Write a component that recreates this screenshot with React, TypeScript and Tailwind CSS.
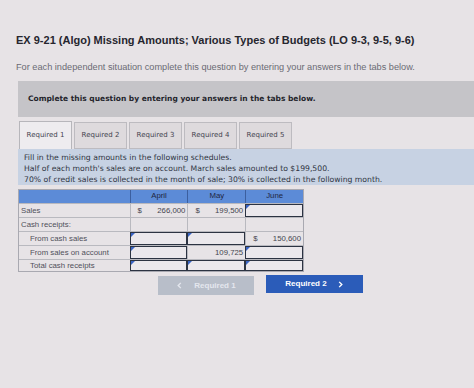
const tabs = ["Required 1", "Required 2", "Required 3", "Required 4", "Required 5"];

type Cell = { kind: "value"; dollar?: boolean; text: string } | { kind: "input" } | { kind: "blank" };

const rows: { label: string; indent?: boolean; cells: Cell[] }[] = [
  {
    label: "Sales",
    cells: [
      { kind: "value", dollar: true, text: "266,000" },
      { kind: "value", dollar: true, text: "199,500" },
      { kind: "input" },
    ],
  },
  { label: "Cash receipts:", cells: [{ kind: "blank" }, { kind: "blank" }, { kind: "blank" }] },
  {
    label: "From cash sales",
    indent: true,
    cells: [{ kind: "input" }, { kind: "input" }, { kind: "value", dollar: true, text: "150,600" }],
  },
  {
    label: "From sales on account",
    indent: true,
    cells: [{ kind: "input" }, { kind: "value", text: "109,725" }, { kind: "input" }],
  },
  {
    label: "Total cash receipts",
    indent: true,
    cells: [{ kind: "input" }, { kind: "input" }, { kind: "input" }],
  },
];

function TableCell({ cell }: { cell: Cell }) {
  if (cell.kind === "input") {
    return (
      <div className="relative w-[58px] h-full border border-[#2c3342] bg-[#ebe8ec]">
        <span className="absolute left-0 top-0 w-0 h-0 border-t-[4px] border-r-[4px] border-t-[#3a64c4] border-r-transparent" />
      </div>
    );
  }
  if (cell.kind === "blank") {
    return <div className="w-[58px] h-full border-l border-[#b9b9bf]" />;
  }
  return (
    <div className="w-[58px] h-full border-l border-[#b9b9bf] flex items-center justify-between pl-[7px] pr-[2px] text-[#45454f]">
      <span>{cell.dollar ? "$" : ""}</span>
      <span>{cell.text}</span>
    </div>
  );
}

export default function App() {
  return (
    <div className="w-[474px] h-[388px] overflow-hidden bg-[#e7e3e6] font-['DejaVu_Sans',sans-serif] text-[#2e2e36]">
      <div className="pt-[32px] pl-[16px] whitespace-nowrap font-['Liberation_Sans',Arial,sans-serif]">
        <h1 className="text-[11px] font-bold text-[#26262e] leading-[16px]">
          EX 9-21 (Algo) Missing Amounts; Various Types of Budgets (LO 9-3, 9-5, 9-6)
        </h1>
        <p className="mt-[13px] text-[9.2px] text-[#6b6b74] leading-[12px]">
          For each independent situation complete this question by entering your answers in the tabs below.
        </p>
      </div>

      <div className="ml-[18px] mt-[8px]">
        <div className="h-[36px] bg-[#c5c4c8] flex items-center pl-[10px] whitespace-nowrap">
          <p className="text-[7.5px] font-bold text-[#24242c]">
            Complete this question by entering your answers in the tabs below.
          </p>
        </div>

        <div className="flex items-end gap-[2px] mt-[4px] ml-[1px] h-[28px]">
          {tabs.map((t, i) => (
            <div
              key={t}
              className={
                i === 0
                  ? "w-[53px] h-[28px] bg-[#eeecef] border border-b-0 border-[#b7b6bb] flex items-center justify-center text-[7px] text-[#444450] relative z-10"
                  : "w-[53px] h-[27px] bg-[#dedadd] border border-[#bdbbc0] flex items-center justify-center text-[7px] text-[#444450]"
              }
            >
              {t}
            </div>
          ))}
        </div>

        <div className="bg-[#c7d2e3] h-[36px] pl-[6px] pt-[3px] text-[7.7px] leading-[11px] text-[#2f3442] whitespace-nowrap">
          <p>Fill in the missing amounts in the following schedules.</p>
          <p>Half of each month&apos;s sales are on account. March sales amounted to $199,500.</p>
          <p>70% of credit sales is collected in the month of sale; 30% is collected in the following month.</p>
        </div>

        <div className="mt-[4px] w-[286px] border border-[#a9a9b1] font-['Liberation_Sans',Arial,sans-serif] text-[7.8px]">
          <div className="flex h-[13px] bg-[#5c8bd7] text-[#1f2640]">
            <div className="w-[111px]" />
            <div className="w-[58px] border-l border-[#3c5f9f] text-center leading-[12px]">April</div>
            <div className="w-[58px] border-l border-[#3c5f9f] text-center leading-[12px]">May</div>
            <div className="w-[58px] border-l border-[#3c5f9f] text-center leading-[12px]">June</div>
          </div>
          {rows.map((r) => (
            <div key={r.label} className="flex h-[14px] border-t border-[#b9b9bf] last:h-[12px]">
              <div className={`w-[111px] flex items-center text-[#50505a] ${r.indent ? "pl-[11px]" : "pl-[2px]"}`}>
                {r.label}
              </div>
              {r.cells.map((c, i) => (
                <TableCell key={i} cell={c} />
              ))}
            </div>
          ))}
        </div>

        <div className="flex items-start gap-[12px] mt-[3px] ml-[140px] font-['Liberation_Sans',Arial,sans-serif] text-[8px] font-bold">
          <div className="w-[96px] h-[19px] mt-[1px] bg-[#b8bec9] text-[#e4e7ee] flex items-center justify-center gap-[11px]">
            <svg viewBox="0 0 8 8" className="w-[7px] h-[7px]" fill="none" stroke="currentColor" strokeWidth="1.6">
              <path d="M5.5 1 L2.5 4 L5.5 7" />
            </svg>
            <span>Required 1</span>
          </div>
          <div className="w-[97px] h-[18px] bg-[#2b5cb9] text-white flex items-center justify-center gap-[10px]">
            <span>Required 2</span>
            <svg viewBox="0 0 8 8" className="w-[7px] h-[7px]" fill="none" stroke="currentColor" strokeWidth="1.6">
              <path d="M2.5 1 L5.5 4 L2.5 7" />
            </svg>
          </div>
        </div>
      </div>
    </div>
  );
}
